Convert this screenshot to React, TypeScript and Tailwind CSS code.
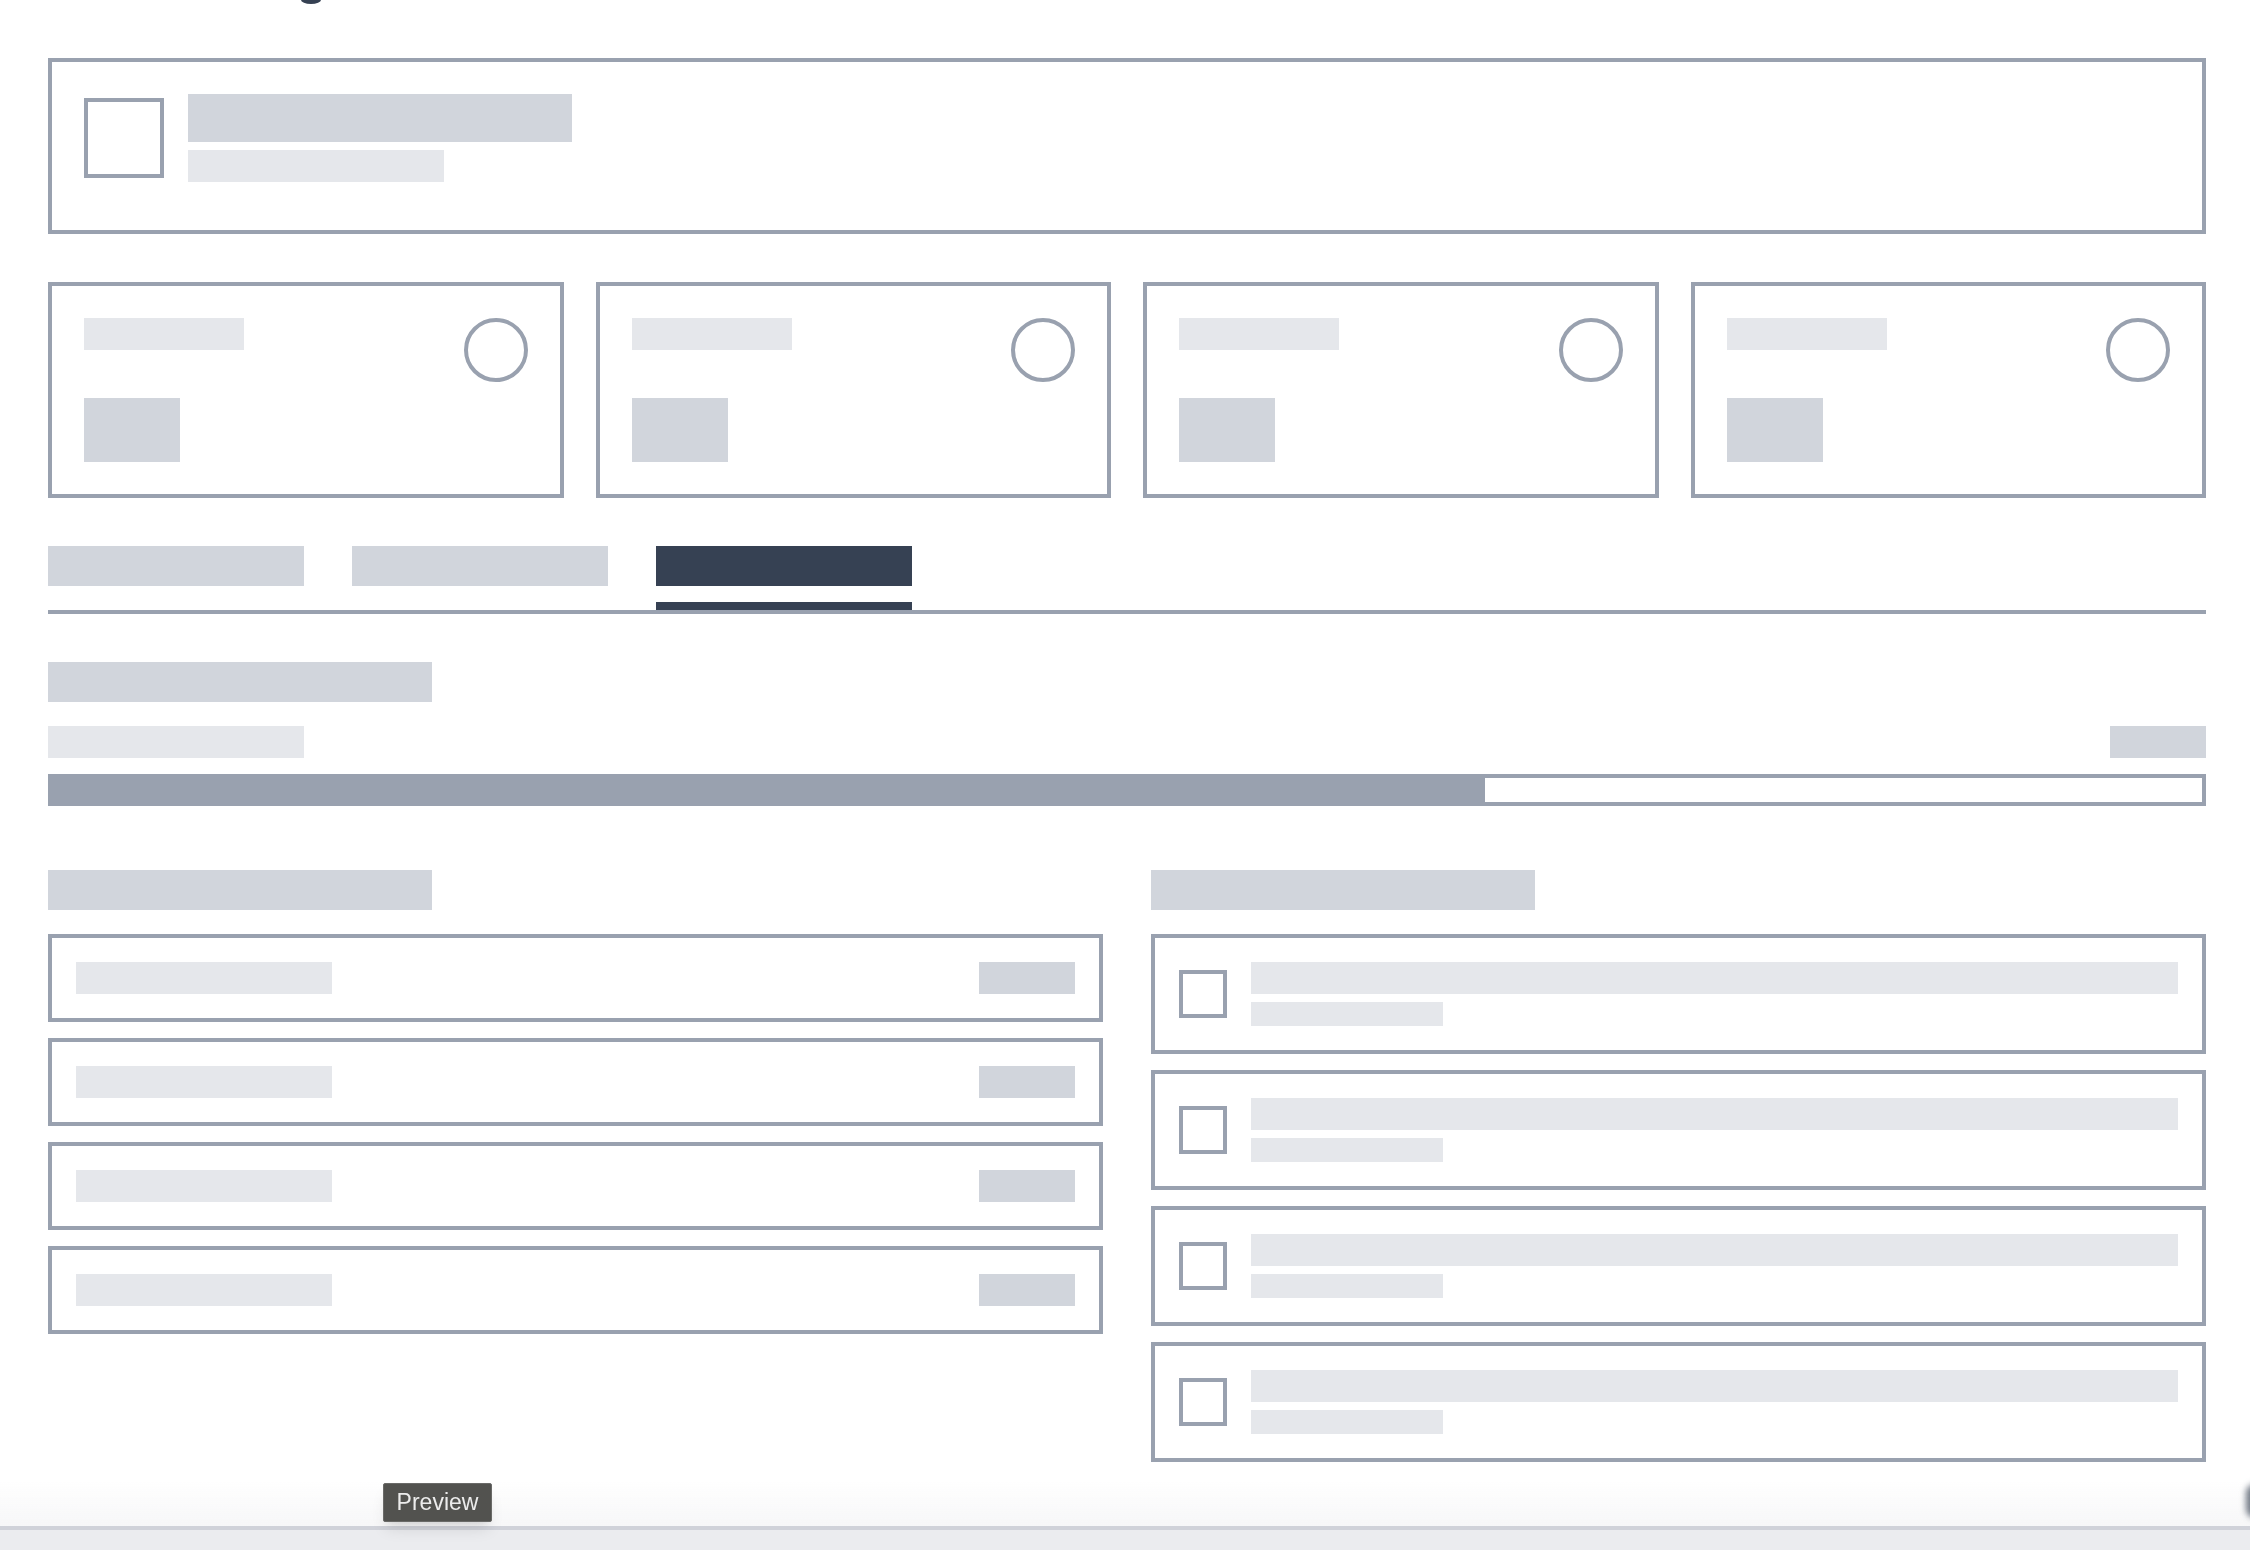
import type { ReactNode } from "react";

const stats = [0, 1, 2, 3];
const rows = [0, 1, 2, 3];
const tabs = [
  { id: "overview", active: false },
  { id: "details", active: false },
  { id: "activity", active: true },
];

export default function App() {
  return (
    <div className="relative min-h-screen bg-white font-['Liberation_Sans',Arial,sans-serif]">
      <div className="w-[2158px] ml-12 pb-[120px]">
        {/* heading, scrolled almost out of view */}
        <div className="h-1 ml-[253px] w-5 rounded-b-[10px_4px] bg-gray-700" />

        <Header />

        <div className="mt-12 grid grid-cols-4 gap-8">
          {stats.map((s) => (
            <StatCard key={s} />
          ))}
        </div>

        <div className="mt-12 flex gap-12 border-b-4 border-gray-400">
          {tabs.map((tab) => (
            <div key={tab.id} className="flex flex-col gap-4">
              <div className={tab.active ? "h-10 w-64 bg-gray-700" : "h-10 w-64 bg-gray-300"} />
              <div className={tab.active ? "h-2 w-64 bg-gray-700" : "h-2 w-64"} />
            </div>
          ))}
        </div>

        <section className="mt-12">
          <div className="h-10 w-96 bg-gray-300" />
          <div className="mt-6 flex items-center justify-between">
            <div className="h-8 w-64 bg-gray-200" />
            <div className="h-8 w-24 bg-gray-300" />
          </div>
          <div className="mt-4 h-8 border-4 border-gray-400 bg-white">
            <div className="h-full w-2/3 bg-gray-400" />
          </div>
        </section>

        <div className="mt-16 grid grid-cols-2 gap-12">
          <Column>
            {rows.map((r) => (
              <div key={r} className="flex items-center justify-between border-4 border-gray-400 p-6">
                <div className="h-8 w-64 bg-gray-200" />
                <div className="h-8 w-24 bg-gray-300" />
              </div>
            ))}
          </Column>
          <Column>
            {rows.map((r) => (
              <div key={r} className="flex items-center gap-6 border-4 border-gray-400 p-6">
                <div className="h-12 w-12 shrink-0 border-4 border-gray-400" />
                <div className="flex-1">
                  <div className="h-8 w-full bg-gray-200" />
                  <div className="mt-2 h-6 w-48 bg-gray-200" />
                </div>
              </div>
            ))}
          </Column>
        </div>
      </div>

      {/* bottom browser strip with tooltip */}
      <div className="fixed inset-x-0 bottom-0">
        <div className="h-[46px] bg-gradient-to-b from-white/0 to-[#f7f7f8]" />
        <div className="h-1 bg-[#d0d2d9]" />
        <div className="h-5 bg-[#ebecef]" />
        <div className="absolute left-[383px] top-[3px] flex h-[39px] w-[109px] items-center justify-center rounded-[2px] border border-[#6a6a68] bg-[#52524f] text-[23px] text-[#ececec] shadow-lg">
          Preview
        </div>
        <div className="absolute right-[-14px] top-[4px] h-[34px] w-[18px] rounded-full bg-gray-700/70 blur-[3px]" />
      </div>
    </div>
  );
}

function Header() {
  return (
    <div className="mt-[54px] flex h-[176px] items-center gap-6 border-4 border-gray-400 px-8 pt-8 pb-12">
      <div className="h-20 w-20 shrink-0 border-4 border-gray-400" />
      <div>
        <div className="h-12 w-96 bg-gray-300" />
        <div className="mt-2 h-8 w-64 bg-gray-200" />
      </div>
    </div>
  );
}

function StatCard() {
  return (
    <div className="border-4 border-gray-400 p-8">
      <div className="flex items-start justify-between">
        <div className="h-8 w-40 bg-gray-200" />
        <div className="h-16 w-16 rounded-full border-4 border-gray-400" />
      </div>
      <div className="mt-4 h-16 w-24 bg-gray-300" />
    </div>
  );
}

function Column({ children }: { children: ReactNode }) {
  return (
    <div>
      <div className="h-10 w-96 bg-gray-300" />
      <div className="mt-6 space-y-4">{children}</div>
    </div>
  );
}
